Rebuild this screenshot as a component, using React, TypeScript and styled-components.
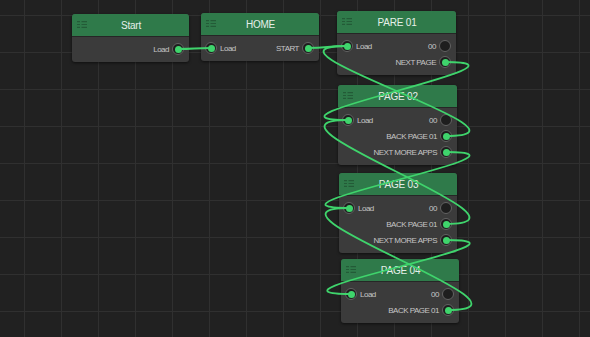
import React from 'react'
import styled, { createGlobalStyle } from 'styled-components'

const GlobalStyle = createGlobalStyle`
  html, body {
    margin: 0;
    padding: 0;
    background: #212121;
    overflow: hidden;
  }
`

const HEADER_H = 23
const ROW_H = 16
const PAD_TOP = 4

const Canvas = styled.div`
  position: relative;
  width: 590px;
  height: 337px;
  overflow: hidden;
  background-color: #212121;
  background-image:
    linear-gradient(to right, #303030 1px, transparent 1px),
    linear-gradient(to bottom, #303030 1px, transparent 1px);
  background-size: 37px 37px;
  background-position: 24px 15px;
  font-family: 'Liberation Sans', Arial, sans-serif;
`

const NodeBox = styled.div<{ $x: number; $y: number; $w: number }>`
  position: absolute;
  left: ${({ $x }) => $x}px;
  top: ${({ $y }) => $y}px;
  width: ${({ $w }) => $w}px;
  z-index: 1;
  border-radius: 3px;
  background: #3b3b3b;
  box-shadow: 0 1px 3px rgba(0, 0, 0, 0.55);
  overflow: hidden;
`

const Header = styled.div`
  height: ${HEADER_H - 1}px;
  display: flex;
  align-items: center;
  background: #2f7a4a;
  border-bottom: 1px solid #262626;
  padding: 0 4px 0 5px;
`

const Grip = styled.svg`
  width: 10px;
  height: 7px;
  flex-shrink: 0;
  margin-top: -1px;
`

const Title = styled.div`
  flex: 1;
  text-align: center;
  color: #e6efe9;
  font-size: 10px;
  letter-spacing: -0.2px;
  margin-right: 10px;
  white-space: nowrap;
`

const Body = styled.div`
  padding: ${PAD_TOP}px 5px 5px 4px;
  display: flex;
  flex-direction: column;
`

const Row = styled.div`
  height: ${ROW_H}px;
  display: flex;
  align-items: center;
`

const Label = styled.span<{ $side: 'in' | 'out' }>`
  color: #c6c6c6;
  font-size: 8px;
  letter-spacing: -0.5px;
  white-space: nowrap;
  margin: ${({ $side }) => ($side === 'in' ? '0 0 0 3px' : '0 3px 0 0')};
`

const Spacer = styled.div`
  flex: 1;
`

const Port = styled.span<{ $on: boolean }>`
  position: relative;
  width: 12px;
  height: 12px;
  flex-shrink: 0;
  box-sizing: border-box;
  border-radius: 50%;
  border: 1.5px solid #626262;
  background: #1e1e1e;
  &::after {
    content: '';
    display: ${({ $on }) => ($on ? 'block' : 'none')};
    position: absolute;
    left: 50%;
    top: 50%;
    width: 7px;
    height: 7px;
    margin: -3.5px 0 0 -3.5px;
    border-radius: 50%;
    background: #3fd46c;
  }
`

const Wires = styled.svg`
  position: absolute;
  left: 0;
  top: 0;
  z-index: 2;
  pointer-events: none;
`

interface RowDef {
  in?: string
  out?: string
}

interface NodeDef {
  id: string
  title: string
  x: number
  y: number
  w: number
  rows: RowDef[]
}

const pageRows: RowDef[] = [
  { in: 'Load', out: '00' },
  { out: 'BACK PAGE 01' },
  { out: 'NEXT MORE APPS' },
]

const nodes: NodeDef[] = [
  { id: 'start', title: 'Start', x: 72, y: 14, w: 117, rows: [{ out: 'Load' }] },
  { id: 'home', title: 'HOME', x: 201, y: 13, w: 118, rows: [{ in: 'Load', out: 'START' }] },
  { id: 'p01', title: 'PARE 01', x: 337, y: 11, w: 119, rows: [{ in: 'Load', out: '00' }, { out: 'NEXT PAGE' }] },
  { id: 'p02', title: 'PAGE 02', x: 338, y: 85, w: 119, rows: pageRows },
  { id: 'p03', title: 'PAGE 03', x: 339, y: 173, w: 118, rows: pageRows },
  { id: 'p04', title: 'PAGE 04', x: 341, y: 259, w: 118, rows: [{ in: 'Load', out: '00' }, { out: 'BACK PAGE 01' }] },
]

// [fromNode, outRow, toNode, inRow]
const links: [string, number, string, number][] = [
  ['start', 0, 'home', 0],
  ['home', 0, 'p01', 0],
  ['p01', 1, 'p02', 0],
  ['p02', 1, 'p01', 0],
  ['p02', 2, 'p03', 0],
  ['p03', 1, 'p02', 0],
  ['p03', 2, 'p04', 0],
  ['p04', 1, 'p03', 0],
]

const byId = (id: string) => nodes.find(n => n.id === id)!

const portPos = (id: string, row: number, side: 'in' | 'out') => {
  const n = byId(id)
  const y = n.y + HEADER_H + PAD_TOP + ROW_H / 2 + row * ROW_H
  const x = side === 'in' ? n.x + 10 : n.x + n.w - 11
  return { x, y }
}

const isOn = (id: string, row: number, side: 'in' | 'out') =>
  links.some(([a, ar, b, br]) => (side === 'out' ? a === id && ar === row : b === id && br === row))

const wirePath = (from: { x: number; y: number }, to: { x: number; y: number }) => {
  const dx = to.x - from.x
  const d = dx >= 0 ? dx / 2 : 110
  return `M${from.x} ${from.y} C${from.x + d} ${from.y} ${to.x - d} ${to.y} ${to.x} ${to.y}`
}

const GripIcon = () => (
  <Grip viewBox="0 0 10 7">
    <g stroke="rgba(0,0,0,0.25)" strokeWidth="1.2">
      <path d="M0 0.6h3M4.5 0.6h5.5M0 3.5h3M4.5 3.5h5.5M0 6.4h3M4.5 6.4h5.5" />
    </g>
  </Grip>
)

const Node: React.FC<{ node: NodeDef }> = ({ node }) => (
  <NodeBox $x={node.x} $y={node.y} $w={node.w}>
    <Header>
      <GripIcon />
      <Title>{node.title}</Title>
    </Header>
    <Body>
      {node.rows.map((r, i) => (
        <Row key={i}>
          {r.in && <Port $on={isOn(node.id, i, 'in')} />}
          {r.in && <Label $side="in">{r.in}</Label>}
          <Spacer />
          {r.out && <Label $side="out">{r.out}</Label>}
          {r.out && <Port $on={isOn(node.id, i, 'out')} />}
        </Row>
      ))}
    </Body>
  </NodeBox>
)

const App: React.FC = () => {
  return (
    <Canvas>
      <GlobalStyle />
      {nodes.map(n => (
        <Node key={n.id} node={n} />
      ))}
      <Wires width={590} height={337}>
        {links.map(([a, ar, b, br], i) => (
          <path
            key={i}
            d={wirePath(portPos(a, ar, 'out'), portPos(b, br, 'in'))}
            fill="none"
            stroke="#3fd46c"
            strokeWidth={1.8}
          />
        ))}
      </Wires>
    </Canvas>
  )
}

export default App
